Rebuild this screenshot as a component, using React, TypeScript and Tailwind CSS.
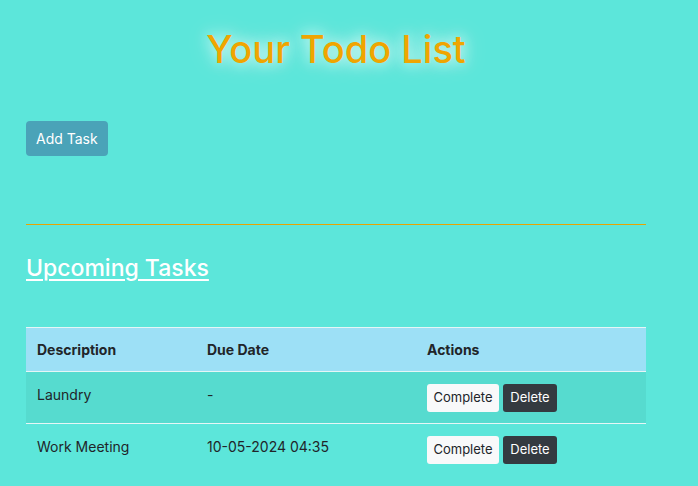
const tasks = [
  { description: "Laundry", due: "-" },
  { description: "Work Meeting", due: "10-05-2024 04:35" },
];

export default function App() {
  return (
    <div className="min-h-[486px] bg-[#5ce6da] font-['Inter',sans-serif] text-[#212529]">
      <div className="w-[620px] ml-[26px] pt-[26px]">
        <h1 className="text-center text-[38px] leading-[46px] font-medium text-[#f0a500] [text-shadow:0_0_14px_rgba(255,255,255,0.9),0_0_24px_rgba(255,255,255,0.6)]">
          Your Todo List
        </h1>

        <button className="mt-[49px] h-[35px] px-[10px] rounded-[4px] bg-[#4aa3b8] text-white text-[14px]">
          Add Task
        </button>

        <div className="mt-[68px] h-px bg-[#e9a300]" />

        <h2 className="mt-[28px] text-[23px] leading-[30px] font-medium text-white underline underline-offset-[3px] decoration-[2px]">
          Upcoming Tasks
        </h2>

        <table className="mt-[44px] w-full text-[14px] border-collapse">
          <thead>
            <tr className="bg-[#9de0f6] border-t border-[#e6f6f6] border-b">
              <th className="h-[44px] px-[11px] text-left font-bold w-[170px]">Description</th>
              <th className="px-[11px] text-left font-bold w-[220px]">Due Date</th>
              <th className="px-[11px] text-left font-bold">Actions</th>
            </tr>
          </thead>
          <tbody>
            {tasks.map((t, i) => (
              <tr
                key={i}
                className={`${i == 0 ? "bg-[#56dbcf] border-b border-[#e6f6f6]" : ""}`}
              >
                <td className="h-[52px] px-[11px]">
                  <span className="relative -top-[3px]">{t.description}</span>
                </td>
                <td className="px-[11px]">
                  <span className="relative -top-[3px]">{t.due}</span>
                </td>
                <td className="px-[11px]">
                  <div className="flex gap-1">
                    <button className="h-[28px] w-[72px] rounded-[3px] bg-[#f8f9fa] text-[13px] text-[#212529]">
                      Complete
                    </button>
                    <button className="h-[28px] w-[54px] rounded-[3px] bg-[#343a40] text-[13px] text-white">
                      Delete
                    </button>
                  </div>
                </td>
              </tr>
            ))}
          </tbody>
        </table>
      </div>
    </div>
  );
}
